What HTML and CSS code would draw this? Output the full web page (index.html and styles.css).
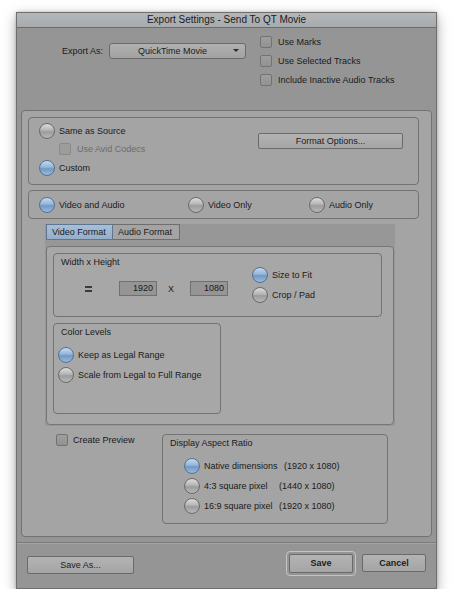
FILE: index.html
```html
<!DOCTYPE html>
<html>
<head>
<meta charset="utf-8">
<link rel="stylesheet" href="styles.css">
</head>
<body>
<div class="window">
  <div class="titlebar">Export Settings - Send To QT Movie</div>
  <div class="top">
    <div class="export-row">
      <span class="label">Export As:</span>
      <div class="select">QuickTime Movie<span class="arrow"></span></div>
    </div>
    <div class="checks">
      <div class="check"><span class="box"></span>Use Marks</div>
      <div class="check"><span class="box"></span>Use Selected Tracks</div>
      <div class="check"><span class="box"></span>Include Inactive Audio Tracks</div>
    </div>
  </div>
  <div class="panel">
    <div class="group g-source">
      <div class="src-col">
        <div class="radio-row"><span class="radio"></span>Same as Source</div>
        <div class="check disabled avid"><span class="box"></span>Use Avid Codecs</div>
        <div class="radio-row custom"><span class="radio on"></span>Custom</div>
      </div>
      <div class="btn fmt">Format Options...</div>
    </div>
    <div class="group g-tracks">
      <div class="radio-row t1"><span class="radio on"></span>Video and Audio</div>
      <div class="radio-row t2"><span class="radio"></span>Video Only</div>
      <div class="radio-row"><span class="radio"></span>Audio Only</div>
    </div>
    <div class="tabs-area">
      <div class="tabs">
        <div class="tab active">Video Format</div>
        <div class="tab">Audio Format</div>
      </div>
      <div class="tab-content">
        <div class="group wh">
          <div class="legend">Width x Height</div>
          <div class="wh-body">
            <div class="dims">
              <span class="link"><span></span><span></span></span>
              <div class="field">1920</div>
              <span class="times">X</span>
              <div class="field">1080</div>
            </div>
            <div class="fit-col">
              <div class="radio-row"><span class="radio on"></span>Size to Fit</div>
              <div class="radio-row"><span class="radio"></span>Crop / Pad</div>
            </div>
          </div>
        </div>
        <div class="group levels">
          <div class="legend">Color Levels</div>
          <div class="levels-body">
            <div class="radio-row"><span class="radio on"></span>Keep as Legal Range</div>
            <div class="radio-row"><span class="radio"></span>Scale from Legal to Full Range</div>
          </div>
        </div>
      </div>
    </div>
    <div class="bottom-row">
      <div class="check preview"><span class="box"></span>Create Preview</div>
      <div class="group aspect">
        <div class="legend">Display Aspect Ratio</div>
        <div class="aspect-body">
          <div class="radio-row"><span class="radio on"></span><span class="ar-name n1">Native dimensions</span>(1920 x 1080)</div>
          <div class="radio-row"><span class="radio"></span><span class="ar-name">4:3 square pixel</span>(1440 x 1080)</div>
          <div class="radio-row"><span class="radio"></span><span class="ar-name">16:9 square pixel</span>(1920 x 1080)</div>
        </div>
      </div>
    </div>
  </div>
  <div class="footer">
    <div class="btn save-as">Save As...</div>
    <div class="ring"><div class="btn save">Save</div></div>
    <div class="btn cancel">Cancel</div>
  </div>
</div>
</body>
</html>
```
FILE: styles.css
```css
* { box-sizing: border-box; }
html, body { margin: 0; padding: 0; background: #ffffff; }
body {
  font-family: "Liberation Sans", Arial, sans-serif;
  font-size: 9px;
  color: #1a1a1a;
}
.window {
  margin: 12px 0 0 16px;
  width: 421px;
  height: 577px;
  background: #959595;
  border: 1px solid #6f6f6f;
  box-shadow: 0 4px 12px rgba(0,0,0,0.35), 0 0 3px rgba(0,0,0,0.2);
  display: flex;
  flex-direction: column;
}
.titlebar {
  height: 15px;
  background: linear-gradient(#b4b7ba, #a8abae);
  border-bottom: 1px solid #6c6c6c;
  text-align: center;
  font-size: 10px;
  line-height: 14px;
  color: #1a1a1a;
}
/* top area */
.top {
  height: 82px;
  display: flex;
}
.export-row {
  display: flex;
  align-items: center;
  height: 16px;
  margin: 15px 0 0 45px;
}
.label { margin-right: 6px; }
.select {
  position: relative;
  width: 137px;
  height: 16px;
  border: 1px solid #6a6a6a;
  border-radius: 3px;
  background: linear-gradient(#b0b0b0, #a2a2a2);
  text-align: center;
  line-height: 14px;
  padding-right: 10px;
}
.arrow {
  position: absolute;
  right: 6px;
  top: 5px;
  border-left: 3px solid transparent;
  border-right: 3px solid transparent;
  border-top: 3px solid #2a2a2a;
}
.checks {
  margin: 8px 0 0 14px;
  display: flex;
  flex-direction: column;
  gap: 7px;
}
.check {
  display: flex;
  align-items: center;
  height: 12px;
}
.box {
  width: 12px;
  height: 12px;
  border: 1px solid #727272;
  border-radius: 2px;
  background: linear-gradient(#9e9e9e, #929292);
  margin-right: 6px;
  flex: none;
}
.check.disabled { color: #6c6c6c; }
.check.disabled .box { border-color: #8a8a8a; background: #9c9c9c; }

/* panel */
.panel {
  margin: 0 4px;
  height: 427px;
  background: #a4a4a4;
  border: 1px solid #727272;
  border-radius: 4px;
  padding: 6px 12px 0 6px;
  display: flex;
  flex-direction: column;
}
.group {
  border: 1px solid #737373;
  border-radius: 4px;
}
.radio-row {
  display: flex;
  align-items: center;
  height: 15px;
  white-space: nowrap;
}
.radio {
  width: 16px;
  height: 16px;
  border-radius: 50%;
  border: 1px solid #6a6a6a;
  background: linear-gradient(#dcdcdc 0%, #b4b4b4 45%, #9c9c9c 55%, #b8b8b8 100%);
  margin-right: 4px;
  flex: none;
}
.radio.on {
  border-color: #56708e;
  background: linear-gradient(#c5daf0 0%, #92b4da 45%, #7398c4 55%, #98bbe0 100%);
}

.g-source {
  height: 68px;
  display: flex;
  padding: 5px 0 0 10px;
}
.src-col { width: 219px; display: flex; flex-direction: column; }
.avid { margin: 5px 0 0 20px; }
.custom { margin-top: 5px; }
.btn {
  border: 1px solid #6a6a6a;
  border-radius: 2px;
  background: linear-gradient(#b3b3b3, #a5a5a5);
  text-align: center;
  color: #1c1c1c;
}
.fmt {
  width: 145px;
  height: 16px;
  line-height: 14px;
  margin-top: 10px;
}

.g-tracks {
  height: 29px;
  margin-top: 5px;
  display: flex;
  align-items: center;
  padding-left: 10px;
}
.t1 { width: 149px; }
.t2 { width: 121px; }

/* tabs */
.tabs-area {
  margin: 5px 0 0 17px;
  width: 350px;
  height: 202px;
  background: #979797;
  padding: 0 1px 1px 1px;
  display: flex;
  flex-direction: column;
}
.tabs { display: flex; height: 16px; margin-left: 0; }
.tab {
  height: 16px;
  padding: 0 5px;
  line-height: 14px;
  border: 1px solid #6e6e6e;
  background: #a4a4a4;
  font-size: 9px;
}
.tab.active {
  width: 67px;
  background: linear-gradient(#a7bfd8, #94aecb);
  border-color: #5f7590;
}
.tab:not(.active) { width: 67px; border-left: none; }
.tab-content {
  margin-top: 6px;
  flex: 1;
  background: #a7a7a7;
  border: 1px solid #777;
  border-radius: 4px;
  padding: 6px 0 0 6px;
}
.legend { padding: 3px 0 0 7px; height: 15px; }
.wh { width: 329px; height: 64px; }
.wh-body { display: flex; }
.dims {
  display: flex;
  align-items: center;
  margin-top: 12px;
  height: 15px;
  width: 198px;
}
.link {
  display: flex;
  flex-direction: column;
  gap: 2px;
  margin: 1px 27px 0 31px;
}
.link span { width: 7px; height: 2px; background: #3a3a3a; }
.field {
  width: 38px;
  height: 15px;
  border: 1px solid #707070;
  background: #959595;
  text-align: right;
  padding-right: 3px;
  line-height: 12px;
}
.times { width: 33px; text-align: center; padding-right: 5px; }
.fit-col {
  display: flex;
  flex-direction: column;
  gap: 5px;
  margin-top: -2px;
}
.levels { width: 168px; height: 91px; margin-top: 6px; }
.levels-body { display: flex; flex-direction: column; gap: 5px; padding: 8px 0 0 4px; }

/* bottom */
.bottom-row { display: flex; margin-top: 8px; }
.preview { width: 106px; margin-left: 28px; }
.preview .box { margin-right: 5px; }
.aspect { width: 226px; height: 90px; }
.aspect-body { display: flex; flex-direction: column; gap: 5px; padding: 8px 0 0 21px; }
.ar-name { width: 75px; }
.ar-name.n1 { width: 80px; }

/* footer */
.footer {
  flex: 1;
  margin-top: 5px;
  border-top: 1px solid #7c7c7c;
  box-shadow: inset 0 1px 0 #a4a4a4;
  display: flex;
  align-items: flex-start;
  padding: 11px 10px 0 10px;
}
.save-as { width: 107px; height: 18px; line-height: 16px; margin-top: 2px; }
.ring {
  margin-left: auto;
  margin-top: -3px;
  padding: 2px;
  border: 1px solid #c4c4c4;
  border-radius: 4px;
}
.save { width: 64px; height: 19px; line-height: 17px; font-weight: bold; }
.cancel { width: 64px; height: 18px; line-height: 16px; margin-left: 6px; font-weight: bold; }
```
